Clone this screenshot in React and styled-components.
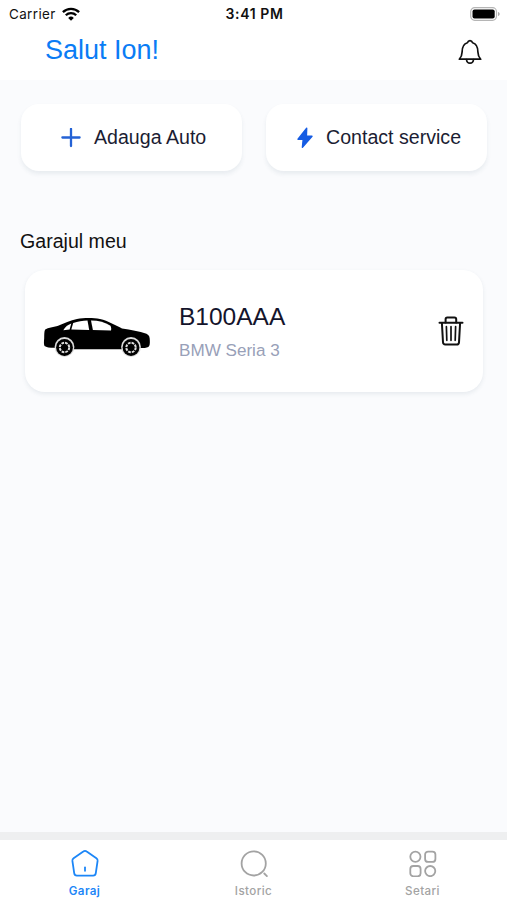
import React from 'react';
import styled, { createGlobalStyle } from 'styled-components';

const GlobalStyle = createGlobalStyle`
  * {
    box-sizing: border-box;
  }
  body {
    margin: 0;
    background-color: #fafbfd;
    font-family: 'Liberation Sans', Arial, sans-serif;
  }
  svg {
    display: block;
    flex-shrink: 0;
  }
`;

const Screen = styled.div`
  display: flex;
  flex-direction: column;
  height: 100vh;
  background-color: #fafbfd;
`;

const StatusBar = styled.div`
  display: grid;
  grid-template-columns: 1fr auto 1fr;
  align-items: center;
  height: 28px;
  padding: 0 7px 1px 9px;
  background-color: #fff;
  font-family: Inter, sans-serif;
  font-size: 13.4px;
  color: #111;
`;

const Carrier = styled.div`
  display: flex;
  align-items: center;
  gap: 6px;
  letter-spacing: 0.4px;
`;

const Clock = styled.div`
  font-weight: 600;
  font-size: 14px;
  letter-spacing: 0.6px;
`;

const BatterySlot = styled.div`
  display: flex;
  justify-content: flex-end;
`;

const Header = styled.header`
  display: flex;
  justify-content: space-between;
  height: 52px;
  padding: 6px 24px 0 45px;
  background-color: #fff;
`;

const Greeting = styled.h1`
  margin: 0;
  font-size: 27px;
  font-weight: 400;
  line-height: 32px;
  color: #0a7cf5;
`;

const IconButton = styled.button`
  display: flex;
  padding: 0;
  border: none;
  background: none;
  color: #111;
`;

const BellButton = styled(IconButton)`
  align-self: flex-start;
  margin-top: 4px;
`;

const Content = styled.main`
  flex: 1;
  padding: 24px 20px 0 21px;
`;

const Actions = styled.div`
  display: grid;
  grid-template-columns: 1fr 1fr;
  gap: 24px;
`;

const ActionButton = styled.button`
  display: flex;
  align-items: center;
  gap: ${({ $gap }) => $gap}px;
  height: 67px;
  padding: 0 0 0 ${({ $inset }) => $inset}px;
  border: none;
  border-radius: 18px;
  background-color: #fff;
  box-shadow: 0 3px 4px rgba(60, 90, 110, 0.09);
  font-family: inherit;
  font-size: 19.6px;
  white-space: nowrap;
  color: #1b1d33;
`;

const SectionTitle = styled.h2`
  margin: 58px 0 17px -1px;
  font-size: 19.6px;
  font-weight: 400;
  line-height: 24px;
  color: #111;
`;

const CarCard = styled.article`
  display: flex;
  align-items: center;
  height: 122px;
  margin: 0 4px;
  padding: 0 19px 0 18px;
  border-radius: 20px;
  background-color: #fff;
  box-shadow: 0 2px 4px rgba(60, 90, 110, 0.1);
`;

const CarInfo = styled.div`
  flex: 1;
  padding: 3px 0 0 28px;
`;

const Plate = styled.div`
  font-size: 24.5px;
  line-height: 30px;
  color: #14142b;
`;

const Model = styled.div`
  margin-top: 7px;
  font-size: 17.1px;
  line-height: 24px;
  color: #98a0b8;
`;

const TabBar = styled.nav`
  display: grid;
  grid-template-columns: repeat(3, 1fr);
  height: 68px;
  border-top: 8px solid #eeeff0;
  background-color: #fff;
`;

const Tab = styled.div`
  display: flex;
  flex-direction: column;
  align-items: center;
  gap: 6px;
  padding-top: 9px;
  font-family: Inter, sans-serif;
  font-size: 11.6px;
  font-weight: ${({ $active }) => ($active ? 600 : 500)};
  line-height: 16px;
  letter-spacing: 0.4px;
  color: ${({ $active }) => ($active ? '#1c86f7' : '#a3a3a3')};
`;

const WifiIcon = () => (
  <svg width="18" height="14" viewBox="0 0 18 14" fill="none" stroke="#000" strokeWidth="2.3">
    <path d="M0.9 5.1a11.6 11.6 0 0 1 16.2 0" />
    <path d="M3.8 8.2a7.4 7.4 0 0 1 10.4 0" />
    <path d="M9 13.7 6.2 10.9a4 4 0 0 1 5.6 0z" fill="#000" stroke="none" />
  </svg>
);

const BatteryIcon = () => (
  <svg width="30" height="14" viewBox="0 0 30 14">
    <rect x="0.7" y="0.7" width="25.8" height="12.6" rx="4" fill="#fff" stroke="#b5b5b5" strokeWidth="1.2" />
    <rect x="2.5" y="2.5" width="22.2" height="9" rx="2" fill="#000" />
    <path d="M28 5v4c1-.3 1.7-1.1 1.7-2S29 5.3 28 5z" fill="#aaa" />
  </svg>
);

const BellIcon = () => (
  <svg width="26" height="28" viewBox="0 0 26 28" fill="none" stroke="currentColor" strokeWidth="1.7" strokeLinecap="round" strokeLinejoin="round">
    <path d="M2.3 21.200h21.400c-1.500-1.700-2.800-3.300-2.800-7.200 0-5.200-1.800-8.300-5.300-9.300-.4-1.100-1.200-2.100-2.600-2.100s-2.200 1-2.600 2.100c-3.500 1-5.300 4.100-5.300 9.300 0 3.900-1.300 5.500-2.800 7.200z" />
    <path d="M9.500 21.500c.2 2.400 1.700 3.700 3.500 3.700s3.300-1.300 3.500-3.700" />
  </svg>
);

const PlusIcon = () => (
  <svg width="20" height="20" viewBox="0 0 20 20" fill="none" stroke="#2462d5" strokeWidth="2.3" strokeLinecap="round">
    <path d="M10 0.900v17.200M1.400 9.500h17.200" />
  </svg>
);

const BoltIcon = () => (
  <svg width="16" height="22" viewBox="0 0 16 22" fill="#165ce3" stroke="#165ce3" strokeWidth="1.400" strokeLinejoin="round">
    <path d="M9.700 1.200 1 12.200h5.200L5.400 20.400 15 9.200H9.400z" />
  </svg>
);

const Wheel = ({ cx }) => (
  <g>
    <circle cx={cx} cy="31" r="9.900" fill="#dcdcdc" />
    <circle cx={cx} cy="31.500" r="8.400" fill="#000" />
    <circle cx={cx} cy="31.500" r="4.700" fill="none" stroke="#dedede" strokeWidth="2" strokeDasharray="2.700 0.991" />
  </g>
);

const CarIcon = () => (
  <svg width="108" height="56" viewBox="0 -13 108 56">
    <path d="M1.500 30C.6 28 1 25 1.200 22c.1-3-.1-7 1-8.500 3-1.900 8-2.300 12.300-3.400C21 7.300 27.500 4.500 34 3.100c7-1.300 16-1.400 23 0 8.500 2 14.500 6 22 9.400 9 1.300 17 2.700 24.500 5.300 2.800 1.300 3.300 3.500 3.300 6.500.2 3 0 5.900-1.500 6.700-2 .9-4.600 1.100-7.600 1.100L79 33.300H31L11 31.800c-4 0-8-.5-9.500-1.800z" />
    <path d="M20.300 14.200c1.800-3.200 4.500-5.300 8-6.600l-1.700 6z" fill="#fff" />
    <path d="M30.200 7c4.600-1.700 9.300-2.400 14.300-2.500l1.700 9.600L28.300 13.600z" fill="#fff" />
    <path d="M48 4.600c7.800 0 14 1.900 19.500 5.200.7 1.500.9 3 .5 4.800l-18.100-.5z" fill="#fff" />
    <Wheel cx={21.5} />
    <Wheel cx={88} />
  </svg>
);

const TrashIcon = () => (
  <svg width="26" height="30" viewBox="0 0 26 30" fill="none" stroke="currentColor" strokeWidth="2" strokeLinecap="round" strokeLinejoin="round">
    <path d="M1.500 6.700h23" />
    <path d="M7.600 6.500V3.300c0-1 .8-1.700 1.700-1.700h7.200c1 0 1.700.8 1.700 1.700v3.200" />
    <path d="M3.900 7l1.100 19.300c.1 1.300 1 2.200 2.300 2.200h11.400c1.300 0 2.200-.9 2.300-2.200L22.100 7" />
    <path d="M8.400 10.700l.4 13.600M13 10.700v13.600M17.600 10.700l-.4 13.600" strokeWidth="1.700" />
  </svg>
);

const HomeIcon = () => (
  <svg width="28" height="28" viewBox="0 0 28 28" fill="none" stroke="currentColor" strokeWidth="1.800" strokeLinecap="round" strokeLinejoin="round">
    <path d="M12.300 2.500 2.600 9.200c-.9.700-1.300 1.600-1.200 2.700l1.800 12.200c.2 1.500 1.200 2.500 2.700 2.500h16.200c1.500 0 2.500-1 2.700-2.500l1.800-12.200c.1-1.100-.3-2-1.200-2.700l-9.700-6.700c-1.100-.8-2.300-.8-3.400 0z" />
    <path d="M14 18.300v3.500" />
  </svg>
);

const SearchIcon = () => (
  <svg width="28" height="28" viewBox="0 0 28 28" fill="none" stroke="currentColor" strokeWidth="1.800" strokeLinecap="round">
    <circle cx="13.700" cy="14.400" r="12.100" />
    <path d="M24.300 24.500l2.600 2.600" />
  </svg>
);

const GridIcon = () => (
  <svg width="28" height="28" viewBox="0 0 28 28" fill="none" stroke="currentColor" strokeWidth="1.800">
    <circle cx="6.400" cy="7.700" r="5.100" />
    <rect x="16.100" y="2.600" width="10.300" height="10.300" rx="3" />
    <rect x="1.300" y="17" width="10.300" height="10.300" rx="3" />
    <circle cx="21.200" cy="22.100" r="5.100" />
  </svg>
);

const App = () => {
  return (
    <Screen>
      <GlobalStyle />
      <StatusBar>
        <Carrier>
          Carrier
          <WifiIcon />
        </Carrier>
        <Clock>3:41 PM</Clock>
        <BatterySlot>
          <BatteryIcon />
        </BatterySlot>
      </StatusBar>
      <Header>
        <Greeting>Salut Ion!</Greeting>
        <BellButton aria-label="Notificari">
          <BellIcon />
        </BellButton>
      </Header>
      <Content>
        <Actions>
          <ActionButton $inset={40} $gap={13}>
            <PlusIcon />
            Adauga Auto
          </ActionButton>
          <ActionButton $inset={31} $gap={13}>
            <BoltIcon />
            Contact service
          </ActionButton>
        </Actions>
        <SectionTitle>Garajul meu</SectionTitle>
        <CarCard>
          <CarIcon />
          <CarInfo>
            <Plate>B100AAA</Plate>
            <Model>BMW Seria 3</Model>
          </CarInfo>
          <IconButton aria-label="Sterge">
            <TrashIcon />
          </IconButton>
        </CarCard>
      </Content>
      <TabBar>
        <Tab $active>
          <HomeIcon />
          Garaj
        </Tab>
        <Tab>
          <SearchIcon />
          Istoric
        </Tab>
        <Tab>
          <GridIcon />
          Setari
        </Tab>
      </TabBar>
    </Screen>
  );
};

export default App;
